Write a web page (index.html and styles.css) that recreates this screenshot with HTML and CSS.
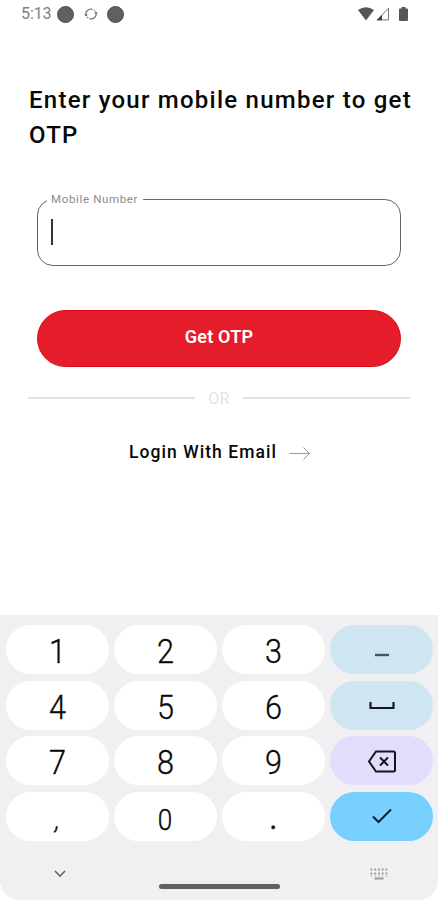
FILE: index.html
```html
<!DOCTYPE html>
<html lang="en">
<head>
<meta charset="utf-8">
<title>Login</title>
<link rel="stylesheet" href="styles.css">
</head>
<body>
<div class="screen">
  <header class="status">
    <span class="time">5:13</span>
    <span class="dot"></span>
    <svg class="sync" width="14" height="14" viewBox="0 0 14 14" fill="none" stroke="#777" stroke-width="1.2"><path d="M2 8.500A5 5 0 0 1 8.500 2.400M12 5.500A5 5 0 0 1 5.500 11.600"/><path d="M.3 7.200 2 9.400 4 7.600zM10 6.600l1.800-2 2 2z" fill="#666" stroke="none"/><path d="M10 3.200l1 1M3.200 10l1 1"/></svg>
    <span class="dot"></span>
    <span class="signals">
      <svg width="16" height="14" viewBox="0 0 16 14"><path d="M0 3Q8-2.600 16 3L8 13.600z" fill="#555"/></svg>
      <svg width="14" height="14" viewBox="0 0 14 14"><path d="M1.200 12.900 12.500 1.200v11.700z" fill="none" stroke="#777" stroke-width="1"/><path d="M.5 13.300 6 7.800v5.500z" fill="#444"/></svg>
      <svg class="battery" width="9" height="14" viewBox="0 0 9 14"><path d="M2.600 0h3.800v1.500H8q1 0 1 1V13q0 1-1 1H1q-1 0-1-1V2.500q0-1 1-1h1.600z" fill="#555"/></svg>
    </span>
  </header>
  <main class="form">
    <h1 class="title">Enter your mobile number to get OTP</h1>
    <fieldset class="field"><legend>Mobile Number</legend><div class="caret"></div></fieldset>
    <button class="submit"><span>Get OTP</span></button>
    <div class="divider"><span>OR</span></div>
    <div class="email"><span>Login With Email</span><svg width="22" height="14" viewBox="0 0 22 14" fill="none" stroke="#999" stroke-width="1"><path d="M.5 7.500H20M14.500 1.500l6 6-6 6"/></svg></div>
  </main>
  <section class="keyboard">
    <div class="keys">
      <div class="key"><span>1</span></div><div class="key"><span>2</span></div><div class="key"><span>3</span></div>
      <div class="key blue"><svg width="26" height="24" viewBox="0 0 26 24"><path d="M6 17h14" stroke="#4b545a" stroke-width="2.400"/></svg></div>
      <div class="key"><span>4</span></div><div class="key"><span>5</span></div><div class="key"><span>6</span></div>
      <div class="key blue"><svg width="26" height="24" viewBox="0 0 26 24" fill="none" stroke="#15191c" stroke-width="2.200"><path d="M1.500 9v6h23V9"/></svg></div>
      <div class="key"><span>7</span></div><div class="key"><span>8</span></div><div class="key"><span>9</span></div>
      <div class="key purple"><svg width="28" height="24" viewBox="0 0 28 24" fill="none" stroke="#17141d" stroke-width="2"><path d="M8 2.500H25.500q1.500 0 1.500 1.500V21q0 1.500-1.500 1.500H8L1 12.500zM12 8.500l8 8M20 8.500l-8 8"/></svg></div>
      <div class="key comma"><span>,</span></div><div class="key zero"><span>0</span></div><div class="key period"><span>.</span></div>
      <div class="key enter"><svg width="22" height="18" viewBox="0 0 22 18" fill="none" stroke="#101e28" stroke-width="2"><path d="M2 9.500 7.500 15 20 2.500"/></svg></div>
    </div>
    <div class="nav">
      <svg class="down" width="12" height="8" viewBox="0 0 12 8" fill="none" stroke="#666" stroke-width="1.600"><path d="M1 1l5 5 5-5"/></svg>
      <span class="home"></span>
      <svg class="board" width="18" height="12" viewBox="0 0 18 12" stroke="#999" fill="none"><path d="M.5 1.500h17M.5 5.500h17" stroke-width="2" stroke-dasharray="1.800 1.950"/><path d="M1 8h16" stroke-width="1" stroke-dasharray="1 2.750"/><path d="M4.500 10.500h9" stroke-width="2"/></svg>
    </div>
  </section>
</div>
</body>
</html>
```
FILE: styles.css
```css
* { box-sizing: border-box; }
body { margin: 0; background: #fff; font-family: Roboto, sans-serif; color: #080808; }
.screen { width: 438px; height: 900px; display: flex; flex-direction: column; overflow: hidden; }
.status { height: 28px; padding: 0 30px 0 21px; display: flex; align-items: center; color: #808080; }
.time { width: 36px; font-size: 16px; letter-spacing: -.1px; line-height: 30px; }
.dot { width: 17px; height: 17px; border-radius: 50%; background: #606060; border: 1px solid #4d4d4d; }
.sync { margin: 0 9px 0 10px; }
.signals { margin-left: auto; display: flex; align-items: center; gap: 2px; }
.battery { margin-left: 7px; }
.form { flex: 1; padding: 55px 28px 0; }
.title { width: 390px; margin: 0; padding-left: 1px; font-size: 24px; line-height: 35px; font-weight: 500; letter-spacing: 1.240px; }
.field { height: 74px; margin: 39px 9px 0; padding: 0 0 0 12px; border: 1px solid #666; border-radius: 16px; }
.field legend { margin-left: -3px; padding: 0 5px 0 4px; height: 14px; font-size: 11.500px; line-height: 14px; letter-spacing: .65px; color: #8c8c8c; }
.caret { width: 2px; height: 26px; margin: 13px 0 0 1px; background: #333; }
.submit { display: flex; align-items: center; justify-content: center; width: 364px; height: 57px; margin: 44px 9px 0; padding: 0 0 4px; border: 1px solid #df0715; border-radius: 29px; background: #e51d2a; color: #fff; font: 600 18px Roboto, sans-serif; letter-spacing: .2px; }
.divider { display: flex; align-items: center; gap: 13px; height: 20px; margin-top: 21px; color: #e4e4e4; font-size: 16px; letter-spacing: .3px; }
.divider::before, .divider::after { content: ""; height: 1.500px; flex: 1; background: #e2e2e2; }
.email { display: flex; align-items: center; justify-content: center; gap: 12px; height: 24px; margin-top: 33px; padding-left: 2px; font-size: 17.500px; font-weight: 500; letter-spacing: 1.050px; }
.email span { margin-top: -2px; }
.keyboard { height: 285px; padding: 10px 5px 0 6px; background: #f0f0f2; border-radius: 0 0 20px 20px; }
.keys { display: grid; grid-template-columns: repeat(4, 1fr); gap: 6.500px 5px; grid-auto-rows: 49px; }
.key { display: flex; align-items: center; justify-content: center; border-radius: 25px; background: #fff; color: #080808; font-size: 34px; font-weight: 300; -webkit-text-stroke: .35px #080808; line-height: 49px; padding-top: 4px; }
.key span { transform: scaleX(.9); }
.blue { background: #d0e5f2; padding: 0; }
.purple { background: #e3dcfc; padding: 0; }
.enter { background: #78d0ff; padding: 0; }
.zero { font-size: 29px; padding-top: 9px; }
.comma { font-size: 27px; padding-top: 9px; }
.comma span { transform: skewX(-10deg); }
.period { font-size: 32px; font-weight: 400; }
.nav { display: grid; grid-template-columns: 108px 1fr 108px; justify-items: center; margin-top: 26px; height: 28px; }
.down { margin-top: 3px; }
.home { width: 121px; height: 5px; margin-top: 17px; border-radius: 3px; background: #606062; }
.board { margin-top: 1px; }
```
